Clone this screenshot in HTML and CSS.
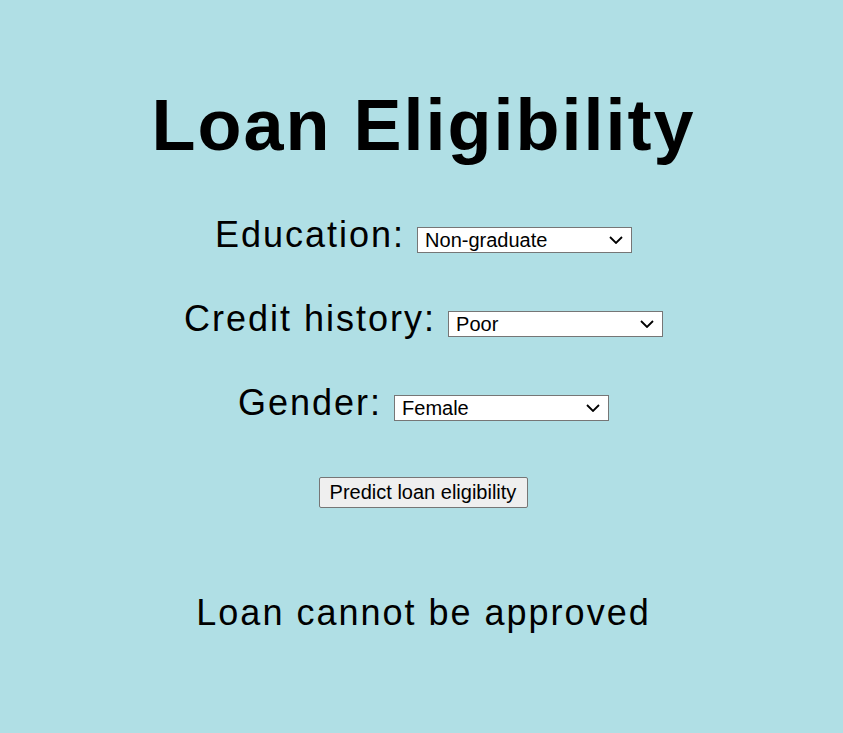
FILE: index.html
```html
<!DOCTYPE html>
<html lang="en">
<head>
    <meta charset="UTF-8">
    <meta name="viewport" content="width=device-width, initial-scale=1.0">
    <title>Loan Eligibility</title>
    <link rel="stylesheet" href="styles.css">
</head>
<body>
    <div class="container">
        <h1>Loan Eligibility</h1>
        <form id="loanForm">
            <div class="row">
                <label for="education">Education:</label>
                <select id="education">
                    <option>Graduate</option>
                    <option selected>Non-graduate</option>
                </select>
            </div>
            <div class="row">
                <label for="credit">Credit history:</label>
                <select id="credit">
                    <option>Good</option>
                    <option selected>Poor</option>
                </select>
            </div>
            <div class="row">
                <label for="gender">Gender:</label>
                <select id="gender">
                    <option>Male</option>
                    <option selected>Female</option>
                </select>
            </div>
            <button type="button">Predict loan eligibility</button>
        </form>
        <div class="result">Loan cannot be approved</div>
    </div>
</body>
</html>
```

FILE: styles.css
```css
body {
    font-family: "Liberation Sans", Arial, sans-serif;
    margin: 0;
    padding: 36px 0 0 4px;
    background-color: #b0dfe5;
    color: #000;
}
.container {
    text-align: center;
}
h1 {
    font-size: 72px;
    font-weight: bold;
    letter-spacing: 2px;
    margin: 48px 0;
}
.row {
    font-size: 36px;
    letter-spacing: 2px;
    height: 42px;
    margin-bottom: 42px;
}
label {
    letter-spacing: 2px;
}
select {
    -webkit-appearance: none;
    appearance: none;
    font-family: "Liberation Sans", Arial, sans-serif;
    font-size: 20px;
    letter-spacing: 0;
    width: 215px;
    height: 26px;
    padding: 0 0 0 7px;
    border: 1px solid #767676;
    border-radius: 0;
    background-color: #fff;
    background-image: url("data:image/svg+xml;utf8,<svg xmlns='http://www.w3.org/2000/svg' width='14' height='8' viewBox='0 0 14 8'><polyline points='1,1 7,7 13,1' fill='none' stroke='black' stroke-width='1.8'/></svg>");
    background-repeat: no-repeat;
    background-position: right 8px center;
    color: #000;
    vertical-align: baseline;
}
button {
    font-family: "Liberation Sans", Arial, sans-serif;
    font-size: 20px;
    padding: 3px 11px 3px 10px;
    margin-top: 11px;
    background-color: #efefef;
    border: 1px solid #767676;
    border-radius: 2px;
    color: #000;
}
.result {
    font-size: 36px;
    letter-spacing: 2px;
    margin-top: 84px;
}
```
